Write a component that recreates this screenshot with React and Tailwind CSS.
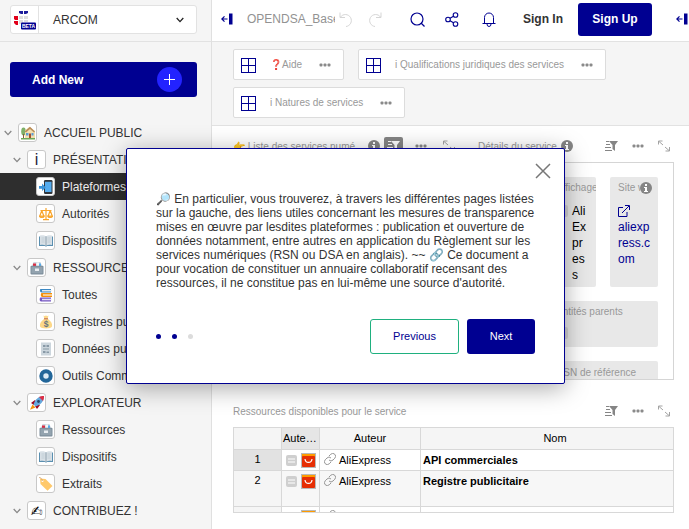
import React from "react";

const cx = (...names) => names.filter(Boolean).join(" ");

function Chevron({ className }) {
  return (
    <svg viewBox="0 0 8 6" fill="none" stroke="currentColor" strokeWidth="1.3" className={cx("h-[6px] w-[8px] shrink-0", className)}>
      <path d="M0.7 1 4 4.6 7.3 1" />
    </svg>
  );
}

function Dots({ className }) {
  return (
    <svg viewBox="0 0 12 4" fill="currentColor" className={cx("h-[4px] w-[12px] text-[#8a8a8a]", className)}>
      <rect x="0.5" y="0.5" width="3" height="3" rx="1" />
      <rect x="4.5" y="0.5" width="3" height="3" rx="1" />
      <rect x="8.5" y="0.5" width="3" height="3" rx="1" />
    </svg>
  );
}

function SortFilter({ className }) {
  return (
    <svg viewBox="0 0 13 12" className={cx("h-[12px] w-[13px]", className)}>
      <path d="M1 1.500h3M1 4.500h4M0 7.500h6M0 10.500h7" stroke="currentColor" strokeWidth="1" fill="none" />
      <path d="M4 1h9L10 5v6L7.500 9V5Z" fill="currentColor" />
    </svg>
  );
}

function Expand() {
  return (
    <svg viewBox="0 0 12 12" fill="none" stroke="#a3a3a3" strokeWidth="1" className="h-[12px] w-[12px]">
      <path d="M0.500 4.500V1H4.500M1 1.500 5 5M11.500 7v4H7.500M11 10.500 7 7" />
    </svg>
  );
}

function Info({ className }) {
  return (
    <svg viewBox="0 0 12 12" className={cx("h-[12px] w-[12px] shrink-0", className)}>
      <circle cx="6" cy="6" r="6" fill="#858585" />
      <rect x="5" y="2" width="2" height="2" fill="#fff" />
      <path d="M4 5h3v4h1v1H4V9h1V6H4Z" fill="#fff" />
    </svg>
  );
}

function Collapse() {
  return (
    <svg viewBox="0 0 12 12" className="h-[12px] w-[12px] shrink-0 text-[#000091]">
      <path d="M6.500 6H1M3.500 3.300 0.800 6l2.700 2.700" fill="none" stroke="currentColor" strokeWidth="1.200" />
      <rect x="8" y="0.500" width="3.500" height="11" fill="currentColor" />
    </svg>
  );
}

function GridIcon() {
  return (
    <svg viewBox="0 0 16 16" fill="none" stroke="#000091" strokeWidth="1" className="h-4 w-4 shrink-0">
      <rect x="0.500" y="1.500" width="14" height="14" />
      <path d="M7.500 1v14M1 8.500h14" />
    </svg>
  );
}

const tree = [
  { icon: "house", label: "ACCUEIL PUBLIC", level: 0 },
  { icon: "i", label: "PRÉSENTATION", level: 1 },
  { icon: "phone", label: "Plateformes", level: 2, active: true },
  { icon: "scales", label: "Autorités", level: 2 },
  { icon: "book", label: "Dispositifs", level: 2 },
  { icon: "files", label: "RESSOURCES", level: 1 },
  { icon: "books", label: "Toutes", level: 2 },
  { icon: "money", label: "Registres publicitaires", level: 2 },
  { icon: "doc", label: "Données publiques", level: 2 },
  { icon: "ring", label: "Outils Communs", level: 2 },
  { icon: "rocket", label: "EXPLORATEUR", level: 1 },
  { icon: "files", label: "Ressources", level: 2 },
  { icon: "book", label: "Dispositifs", level: 2 },
  { icon: "tag", label: "Extraits", level: 2 },
  { icon: "hand", label: "CONTRIBUEZ !", level: 1 },
];

const indent = ["pl-1", "pl-[13px]", "pl-9"];

const drawings = {
  house: (
    <>
      <ellipse cx="2.500" cy="5.500" rx="2.300" ry="4" fill="#7fb069" />
      <rect x="2" y="8" width="1" height="4" fill="#8a5a3a" />
      <path d="M5 3.500 8.500 0.800 14 5v7H4V5Z" fill="#f3dfb0" />
      <path d="M3.500 5.500 9 0.800 14 5.500 13 6.500 9 3 5 6.500Z" fill="#b98d5a" />
      <rect x="5" y="7" width="2.500" height="2.500" fill="#5b9bd5" />
      <rect x="10.500" y="7" width="2" height="2.500" fill="#5b9bd5" />
      <rect x="8" y="7.500" width="2" height="4.500" fill="#a5512d" />
      <path d="M0 12h14v1.500H0z" fill="#6fa758" />
    </>
  ),
  phone: (
    <>
      <rect x="5" y="0" width="8.500" height="14" rx="1.200" fill="#31373d" />
      <rect x="6" y="1.800" width="6.500" height="10.200" fill="#55acee" />
      <path d="M0 6h3V3.500L6.800 7.500 3 11V8.700H0Z" fill="#3b94d9" />
    </>
  ),
  scales: (
    <g fill="none" stroke="#f9a52b" strokeWidth="1.200">
      <path d="M7 1v11M1.500 3.500 12.500 3.500M4 12.700h6M2.800 3.500.8 9M2.800 3.500l2 5.500M11.200 3.500l-2 5.500M11.200 3.500l2 5.500" />
      <path d="M.3 9h5c-.5 2-4.500 2-5 0ZM8.700 9h5c-.5 2-4.500 2-5 0Z" fill="#ffc35a" />
    </g>
  ),
  book: (
    <>
      <path d="M0 2.500h14V12H8L7 12.800 6 12H0Z" fill="#5a8fb0" />
      <path d="M1 1.500c2.500-.5 4.500-.5 6 1 1.500-1.500 3.500-1.500 6-1V11c-2.500-.5-4.500-.3-6 .8C5.500 10.700 3.500 10.500 1 11Z" fill="#d8e0e6" />
      <path d="M7 2.500v9.300" stroke="#8a9ba8" strokeWidth="0.900" />
      <path d="M2.500 4h3M2.500 6h3M2.500 8h3M8.500 4h3M8.500 6h3M8.500 8h3" stroke="#b9c6cf" strokeWidth="0.700" />
    </>
  ),
  files: (
    <>
      <path d="M2 5 3.500 1h7L12 5Z" fill="#cdd7df" />
      <path d="M3 2.500h3V5H3z" fill="#dd2e44" />
      <path d="M6.500 1.500H9V5H6.500z" fill="#f4f7f9" />
      <path d="M9 2.500h2V5H9z" fill="#55acee" />
      <rect x="0.500" y="4.800" width="13" height="8.700" rx="1" fill="#7d8e9b" />
      <rect x="1.500" y="5.800" width="11" height="6.500" fill="#93a3af" />
      <rect x="5" y="7.500" width="4" height="2.500" fill="#e8edf1" />
    </>
  ),
  books: (
    <>
      <path d="M1.500 1H12v3.500H2.500C.8 4.500.5 1.500 1.500 1Z" fill="#3b88c3" />
      <path d="M3 2h9.500v1.500H3z" fill="#dfe8ee" />
      <path d="M2.500 5H13v4H3.200C1.500 9 1.500 5.500 2.500 5Z" fill="#f4900c" />
      <path d="M4 6.200h9v1.500H4z" fill="#ffe0b0" />
      <path d="M1.500 9.500H12v4H2C.3 13.500.3 10 1.500 9.500Z" fill="#7457c2" />
      <path d="M3 10.700h9.500v1.600H3z" fill="#e5e0f3" />
    </>
  ),
  money: (
    <>
      <path d="M5 4C1.500 6.500.5 9 1 11.500 1.500 14 12.500 14 13 11.500c.5-2.500-.5-5-4-7.500Z" fill="#fdd888" />
      <path d="M4.500 0.500 6 1.200 7 .3 8 1.200l1.500-.7L8.700 4H5.300Z" fill="#fdd888" />
      <path d="M5 3.800h4" stroke="#bf6952" strokeWidth="1" />
      <text x="7" y="11.600" textAnchor="middle" fontSize="8.500" fontWeight="bold" fill="#67757f">$</text>
    </>
  ),
  doc: (
    <>
      <rect x="2" y="0.500" width="10" height="13" fill="#ccd6dd" />
      <path d="M4 3h2.500v2H4zM7.500 3H10v2H7.500zM4 6.500h6v1H4zM4 9h2.500v2H4zM7.500 9.500H10V11H7.500z" fill="#8899a6" />
    </>
  ),
  ring: <circle cx="7" cy="7" r="4.700" fill="#dcebf5" stroke="#226699" strokeWidth="4" />,
  rocket: (
    <>
      <path d="M0 13.800 2.500 8.500 5.500 11.500Z" fill="#f4900c" />
      <path d="M1 7 5 4l2 3-3 2ZM7 13l3-4-3-2-2 3Z" fill="#a0041e" />
      <path d="M14 0C8.500 0 5 3.500 3.500 8.500l2 2C10.500 9 14 5.500 14 0Z" fill="#66a8dc" />
      <path d="M14 0c-2 0-3.500.3-5 1l4 4c.7-1.500 1-3 1-5Z" fill="#dd2e44" />
      <circle cx="8.500" cy="5.500" r="1.400" fill="#27466b" />
    </>
  ),
  tag: (
    <>
      <path d="M1 1.500 6.500 2 13.500 9 8.500 13.800 1.500 7Z" fill="#ffc96b" />
      <circle cx="3.500" cy="4" r="1" fill="#fff" />
      <path d="M0 .5C2 .5 3 2 3.500 4" fill="none" stroke="#c9955b" strokeWidth="0.700" />
    </>
  ),
};

function TreeIcon({ name }) {
  if (name === "i") return <span className="text-base leading-4 text-[#1f2440]">i</span>;
  if (name === "hand") return <span className="font-['DejaVu_Sans',sans-serif] text-sm leading-4">{"\u270D\uFE0E"}</span>;
  return (
    <svg viewBox="0 0 14 14" className="h-[14px] w-[14px] shrink-0">
      {drawings[name]}
    </svg>
  );
}

function Sidebar() {
  return (
    <aside className="w-[212px] shrink-0 overflow-hidden border-r border-[#e0e0e0] bg-[#f5f5f5]">
      <div className="h-[42px] border-b border-[#e2e2e2] px-[10px] pt-[5px] pr-[14px]">
        <button className="flex h-[29px] w-full items-center rounded-[3px] border border-[#e2e2e2] bg-white pr-3">
          <span className="flex h-full w-7 shrink-0 items-center justify-center border-r border-[#e2e2e2]">
            <svg viewBox="0 0 22 20" className="h-5 w-[22px]">
              <path d="M5 1h4v3H7L5 3zM10 1h4v2l-2 1h-2z" fill="#1b1b9b" />
              <path d="M0 6h4v4H1L0 9zM0 11h4v4H2l-2-2z" fill="#e1001a" />
              <path d="M5 6h4v3H5zM10 6h4v3h-4zM5 10h4v4H5zM10 10h4v2h-4z" fill="#dedede" />
              <rect x="7" y="12.500" width="15" height="7" rx="1" fill="#000091" />
              <text x="14.500" y="18" textAnchor="middle" fontSize="5" fontWeight="bold" fill="#fff">BETA</text>
            </svg>
          </span>
          <span className="ml-[14px] flex-1 text-left text-xs text-[#333]">ARCOM</span>
          <Chevron className="text-[#222]" />
        </button>
      </div>
      <div className="px-[10px] pt-5 pr-[14px]">
        <button className="flex h-[35px] w-full items-center justify-between rounded-[3px] bg-[#000091] pr-[15px] pl-[22px] text-xs font-bold text-white">
          Add New
          <span className="flex h-[25px] w-[25px] items-center justify-center rounded-full bg-[#2323ff]">
            <svg viewBox="0 0 11 11" stroke="#fff" className="h-[11px] w-[11px]">
              <path d="M5.500 0v11M0 5.500h11" />
            </svg>
          </span>
        </button>
      </div>
      <nav className="pt-[22px]">
        {tree.map((item, i) => (
          <a
            key={i}
            href="#"
            className={cx("flex h-[27px] items-center text-xs whitespace-nowrap", indent[item.level], item.active ? "bg-[#2e2e2e] text-[#ececec]" : "text-[#333]")}
          >
            {item.level < 2 && <Chevron className="mr-[6px] text-[#888]" />}
            <span className="mr-[7px] flex h-[19px] w-[19px] shrink-0 items-center justify-center overflow-hidden rounded-[3px] border border-[#c8c8c8] bg-white text-black">
              <TreeIcon name={item.icon} />
            </span>
            {item.label}
          </a>
        ))}
      </nav>
    </aside>
  );
}

function Header() {
  return (
    <header className="flex h-[42px] items-center overflow-hidden border-b border-[#e2e2e2] bg-white pb-[3px] pl-[9px]">
      <button aria-label="Collapse sidebar"><Collapse /></button>
      <span className="ml-[14px] w-[88px] shrink-0 overflow-hidden text-xs whitespace-nowrap text-[#929292]">OPENDSA_Base</span>
      <button aria-label="Undo" className="ml-1">
        <svg viewBox="0 0 14 15" fill="none" stroke="#d5d5d5" className="h-[15px] w-[14px]">
          <path d="M1 0.500v5h5M1.500 5A6 6 0 1 1 7 14.500" />
        </svg>
      </button>
      <button aria-label="Redo" className="ml-[15px]">
        <svg viewBox="0 0 14 15" fill="none" stroke="#d5d5d5" className="h-[15px] w-[14px]">
          <path d="M13 0.500v5H8M12.500 5A6 6 0 1 0 7 14.500" />
        </svg>
      </button>
      <button aria-label="Search" className="ml-7">
        <svg viewBox="0 0 15 15" fill="none" stroke="#000091" strokeWidth="1.200" className="h-[15px] w-[15px]">
          <circle cx="7" cy="7" r="6" />
          <path d="m11 11 3.500 3.500" />
        </svg>
      </button>
      <button aria-label="Share" className="ml-5">
        <svg viewBox="0 0 14 15" fill="none" stroke="#000091" strokeWidth="1.100" className="h-[15px] w-[14px]">
          <circle cx="3" cy="7.500" r="2.300" />
          <circle cx="10.500" cy="3" r="2.300" />
          <circle cx="10.500" cy="12" r="2.300" />
          <path d="m5 6.300 3.500-2.100M5 8.700l3.500 2.100" />
        </svg>
      </button>
      <button aria-label="Notifications" className="ml-[23px]">
        <svg viewBox="0 0 14 15" fill="none" stroke="#000091" className="h-[15px] w-[14px]">
          <path d="M0.500 11.500h13M2.500 11V5.500a4.500 4.500 0 0 1 9 0V11M5 12a2 2.500 0 0 0 4 0" />
        </svg>
      </button>
      <button className="ml-[27px] text-xs font-bold whitespace-nowrap text-[#333]">Sign In</button>
      <button className="ml-auto h-[33px] w-[74px] shrink-0 rounded-[3px] bg-[#000091] text-xs font-bold text-white">Sign Up</button>
      <button aria-label="Collapse panel" className="ml-6 w-[13px] shrink-0"><Collapse /></button>
    </header>
  );
}

function LinkCard({ icon, label }) {
  return (
    <div className="flex h-[31px] items-center rounded-[2px] border border-[#dcdcdc] bg-white pr-3 pl-[7px]">
      <GridIcon />
      <a href="#" className="mr-[17px] ml-[13px] flex items-center text-[10px] whitespace-nowrap text-[#999]">
        {icon && <span className="text-[#c8102e]">{icon}</span>}
        {label}
      </a>
      <button aria-label="More"><Dots /></button>
    </div>
  );
}

function PanelTools() {
  return (
    <span className="ml-auto flex items-center gap-[14px] pr-1">
      <button aria-label="Sort and filter"><SortFilter className="text-[#858585]" /></button>
      <button aria-label="More"><Dots /></button>
      <button aria-label="Expand"><Expand /></button>
    </span>
  );
}

function AliLogo() {
  return (
    <svg viewBox="0 0 15 15" className="h-[15px] w-[15px] shrink-0">
      <rect width="15" height="15" fill="#b9b9b9" />
      <rect x="1" y="1" width="13" height="4" fill="#ff9b00" />
      <rect x="1" y="3" width="13" height="11" rx="1" fill="#e62e04" />
      <path d="M4 6c0.500 4.500 6.500 4.500 7 0" fill="none" stroke="#fff" strokeWidth="1.200" />
    </svg>
  );
}

function LinkIcon() {
  return (
    <svg viewBox="0 0 24 24" fill="none" stroke="#8a8a8a" strokeWidth="1.800" className="h-3 w-3 shrink-0">
      <path d="M10 14a5.500 5.500 0 0 0 8 0l3.500-3.500a5.500 5.500 0 0 0-8-8L10 6M14 10a5.500 5.500 0 0 0-8 0l-3.500 3.500a5.500 5.500 0 0 0 8 8L14 18" />
    </svg>
  );
}

const cell = "border-b border-[#d8d8d8] align-top";

function Row({ n, name, tall, active }) {
  return (
    <tr className={cx(tall ? "h-9 bg-[#f7f7f7]" : "h-[21px] bg-white")}>
      <th scope="row" className={cx(cell, "border-r pt-[2px] text-center text-[11px] font-normal", active ? "bg-[#e2e2e2]" : "bg-[#f5f5f5]")}>{n}</th>
      <td className={cx(cell, "border-r")}>
        <span className="flex items-center gap-1 pt-[3px] pl-1">
          <svg viewBox="0 0 11 11" className="h-[11px] w-[11px] shrink-0">
            <rect width="11" height="11" rx="2" fill="#cfcfcf" />
            <path d="M2 4h7M2 7h7" stroke="#fff" />
          </svg>
          <AliLogo />
        </span>
      </td>
      <td className={cx(cell, "border-r")}>
        <span className="flex items-start gap-[3px] pt-[3px] pl-1 text-[11px]"><LinkIcon />AliExpress</span>
      </td>
      <td className={cx(cell, "pt-[3px] pl-[2px] text-[11px] font-bold")}>{name}</td>
    </tr>
  );
}

function Main() {
  return (
    <main className="flex-1 bg-white">
      <div className="flex flex-wrap gap-x-[14px] gap-y-[7px] border-b border-[#e2e2e2] bg-[#f5f5f5] px-[21px] py-[7px]">
        <LinkCard icon="❓" label="Aide" />
        <LinkCard label="i Qualifications juridiques des services" />
        <LinkCard label="i Natures de services" />
      </div>

      <div className="grid grid-cols-[222fr_203fr] gap-4 pt-[10px] pr-[15px] pl-[21px]">
        <section>
          <div className="flex h-5 items-center text-[10px] whitespace-nowrap text-[#999]">
            <span className="w-[135px] overflow-hidden">👉 Liste des services numé</span>
            <Info />
            <span className="ml-auto flex items-center gap-3">
              <button aria-label="Sort and filter" className="flex h-[18px] w-[19px] items-center justify-center rounded-[2px] bg-[#858585] text-white">
                <SortFilter />
              </button>
              <button aria-label="More"><Dots /></button>
              <button aria-label="Expand" className="ml-1"><Expand /></button>
            </span>
          </div>
        </section>
        <section>
          <div className="flex h-5 items-center gap-1 pl-[7px] text-[10px] whitespace-nowrap text-[#999]">
            Détails du service
            <Info />
            <PanelTools />
          </div>
          <div className="mt-[6px] h-[218px] overflow-hidden border border-[#d5d5d5] p-[14px] pr-[15px]">
            <div className="grid grid-cols-3 gap-[14px] text-[10px] text-[#999]">
              <div className="h-[110px] rounded-[2px] bg-[#e8e8e8]" />
              <div className="h-[110px] overflow-hidden rounded-[2px] bg-[#e8e8e8] pt-[3px] pl-2">
                Affichage
                <div className="flex gap-1 pt-2 text-xs text-black">
                  <span className="mt-[2px] h-3 w-3 shrink-0 rounded-[2px] bg-[#d2d2d2]" />
                  <span className="w-4 break-all">AliExpress</span>
                </div>
              </div>
              <div className="h-[110px] overflow-hidden rounded-[2px] bg-[#e8e8e8] pt-[3px] pl-2">
                <div className="flex items-center">
                  <span className="w-[22px] shrink-0 overflow-hidden whitespace-nowrap">Site web</span>
                  <Info />
                </div>
                <a href="#" className="block w-9 pt-2 text-xs break-all text-[#000091]">
                  <svg viewBox="0 0 12 12" fill="none" stroke="currentColor" className="mt-[2px] mb-[2px] h-3 w-3">
                    <path d="M5 2.500H0.500v9H9V7M4 8l7-7M7 0.500h4.500V5" />
                  </svg>
                  aliexp
                  <br />
                  ress.c
                  <br />
                  om
                </a>
              </div>
              <div className="h-[46px] rounded-[2px] bg-[#e8e8e8]" />
              <div className="col-span-2 h-[46px] rounded-[2px] bg-[#e8e8e8] pt-[3px] pl-2">
                Entités parents
                <span className="mt-2 block h-3 w-3 rounded-[2px] bg-[#d2d2d2]" />
              </div>
              <div className="h-[46px] rounded-[2px] bg-[#e8e8e8]" />
              <div className="col-span-2 h-[46px] rounded-[2px] bg-[#e8e8e8] pt-1 pl-2">RSN de référence</div>
            </div>
          </div>
        </section>
      </div>

      <section className="pt-[21px] pr-[15px] pl-[21px]">
        <div className="flex h-5 items-center text-[10px] text-[#999]">
          Ressources disponibles pour le service
          <PanelTools />
        </div>
        <div className="mt-[6px] h-[86px] overflow-hidden border border-[#d8d8d8]">
          <table className="w-full table-fixed border-separate border-spacing-0 text-xs text-black">
            <colgroup>
              <col className="w-12" />
              <col className="w-[38px]" />
              <col className="w-[101px]" />
              <col />
            </colgroup>
            <thead>
              <tr className="h-[22px] bg-[#f5f5f5] text-[11px]">
                <td className="border-r border-b border-[#d8d8d8]" />
                <th className="truncate border-r border-b border-[#d8d8d8] bg-[#e6e6e6] pl-px text-left font-normal">Auteur logo</th>
                <th className="border-r border-b border-[#d8d8d8] font-normal">Auteur</th>
                <th className="border-b border-[#d8d8d8] pl-4 font-normal">Nom</th>
              </tr>
            </thead>
            <tbody>
              <Row n="1" name="API commerciales" active />
              <Row n="2" name="Registre publicitaire" tall />
              <Row n="3" name="Centre de transparence" />
            </tbody>
          </table>
        </div>
      </section>
    </main>
  );
}

function TourDialog() {
  return (
    <div role="dialog" aria-label="Visite guidée" className="absolute top-[148px] left-[126px] flex h-[236px] w-[439px] flex-col rounded-[2px] border border-[#000091] bg-white px-[29px] shadow-[0_4px_24px_rgba(0,0,0,0.35)]">
      <button aria-label="Close" className="mt-[14px] -mr-4 self-end text-[#777]">
        <svg viewBox="0 0 16 16" fill="none" stroke="currentColor" strokeWidth="1.500" className="h-4 w-4">
          <path d="m1 1 14 14M15 1 1 15" />
        </svg>
      </button>
      <p className="mt-[13px] text-xs leading-[14px] whitespace-nowrap text-[#333]">
        🔎 En particulier, vous trouverez, à travers les différentes pages listées
        <br />
        sur la gauche, des liens utiles concernant les mesures de transparence
        <br />
        mises en œuvre par lesdites plateformes : publication et ouverture de
        <br />
        données notamment, entre autres en application du Règlement sur les
        <br />
        services numériques (RSN ou DSA en anglais). ~~ 🔗 Ce document a
        <br />
        pour vocation de constituer un annuaire collaboratif recensant des
        <br />
        ressources, il ne constitue pas en lui-même une source d'autorité.
      </p>
      <div className="mt-auto mb-[29px] flex items-center text-[11px]">
        <span className="flex gap-[11px]">
          <i className="h-[5px] w-[5px] rounded-full bg-[#000091]" />
          <i className="h-[5px] w-[5px] rounded-full bg-[#000091]" />
          <i className="h-[5px] w-[5px] rounded-full bg-[#dcdcdc]" />
        </span>
        <button className="ml-auto h-[35px] w-[89px] rounded-[3px] border border-[#1fb07f] bg-white text-[#000091]">Previous</button>
        <button className="ml-2 h-[35px] w-[68px] rounded-[3px] bg-[#000091] text-white">Next</button>
      </div>
    </div>
  );
}

export default function App() {
  return (
    <div className="relative flex h-screen overflow-hidden bg-white font-['Liberation_Sans',Arial,sans-serif]">
      <Sidebar />
      <div className="flex min-w-0 flex-1 flex-col">
        <Header />
        <Main />
      </div>
      <TourDialog />
    </div>
  );
}
